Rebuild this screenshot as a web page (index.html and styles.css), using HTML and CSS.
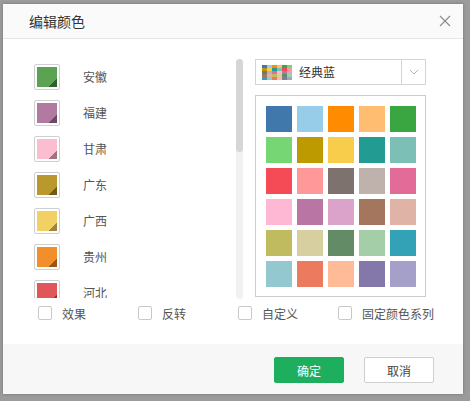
FILE: index.html
```html
<!DOCTYPE html>
<html>
<head>
<meta charset="utf-8">
<link rel="stylesheet" href="styles.css">
</head>
<body>
<div class="dialog">
  <div class="header">
    <span class="title">编辑颜色</span>
    <svg class="close" width="12" height="12" viewBox="0 0 12 12"><path d="M1 1L11 11M11 1L1 11" stroke="#8a8a8a" stroke-width="1.1" fill="none"/></svg>
  </div>
  <div class="content">
    <div class="main">
      <div class="list">
        <div class="item"><span class="sw" style="--c:#5ba353;--d:#335e2e"><i></i></span><span class="lbl">安徽</span></div>
        <div class="item"><span class="sw" style="--c:#b07aa1;--d:#6d4a64"><i></i></span><span class="lbl">福建</span></div>
        <div class="item"><span class="sw" style="--c:#fbbed1;--d:#9c7580"><i></i></span><span class="lbl">甘肃</span></div>
        <div class="item"><span class="sw" style="--c:#b9992e;--d:#6e5a1a"><i></i></span><span class="lbl">广东</span></div>
        <div class="item"><span class="sw" style="--c:#f2d064;--d:#9a843e"><i></i></span><span class="lbl">广西</span></div>
        <div class="item"><span class="sw" style="--c:#f28e2b;--d:#96561a"><i></i></span><span class="lbl">贵州</span></div>
        <div class="item"><span class="sw" style="--c:#e15759;--d:#8b3436"><i></i></span><span class="lbl">河北</span></div>
      </div>
      <div class="track"><div class="thumb"></div></div>
      <div class="right">
        <div class="select">
          <div class="sel-main">
            <span class="mini">
              <i style="background:#4178ab"></i><i style="background:#97cde9"></i><i style="background:#ff8b00"></i><i style="background:#ffbd72"></i><i style="background:#39a641"></i><i style="background:#75d673"></i>
              <i style="background:#bc9a00"></i><i style="background:#f8cd4c"></i><i style="background:#229b93"></i><i style="background:#7bbfb6"></i><i style="background:#f44b57"></i><i style="background:#fe9899"></i>
              <i style="background:#7d726e"></i><i style="background:#bfb1ac"></i><i style="background:#e26b97"></i><i style="background:#feb8d4"></i><i style="background:#b976a5"></i><i style="background:#dba3c9"></i>
              <i style="background:#a4765e"></i><i style="background:#dfb3a6"></i><i style="background:#c1bb60"></i><i style="background:#d7cf9f"></i><i style="background:#638b65"></i><i style="background:#a4cea8"></i>
              <i style="background:#33a2b6"></i><i style="background:#93c8d1"></i><i style="background:#eb7a5e"></i><i style="background:#ffbb97"></i><i style="background:#8477a9"></i><i style="background:#a4a0c9"></i>
            </span>
            <span class="sel-text">经典蓝</span>
          </div>
          <div class="sel-arrow">
            <svg width="10" height="6" viewBox="0 0 10 6"><path d="M1 1L5 5L9 1" stroke="#b5b5b5" stroke-width="1" fill="none"/></svg>
          </div>
        </div>
        <div class="palette">
          <i style="background:#4178ab"></i><i style="background:#97cde9"></i><i style="background:#ff8b00"></i><i style="background:#ffbd72"></i><i style="background:#39a641"></i>
          <i style="background:#75d673"></i><i style="background:#bc9a00"></i><i style="background:#f8cd4c"></i><i style="background:#229b93"></i><i style="background:#7bbfb6"></i>
          <i style="background:#f44b57"></i><i style="background:#fe9899"></i><i style="background:#7d726e"></i><i style="background:#bfb1ac"></i><i style="background:#e26b97"></i>
          <i style="background:#feb8d4"></i><i style="background:#b976a5"></i><i style="background:#dba3c9"></i><i style="background:#a4765e"></i><i style="background:#dfb3a6"></i>
          <i style="background:#c1bb60"></i><i style="background:#d7cf9f"></i><i style="background:#638b65"></i><i style="background:#a4cea8"></i><i style="background:#33a2b6"></i>
          <i style="background:#93c8d1"></i><i style="background:#eb7a5e"></i><i style="background:#ffbb97"></i><i style="background:#8477a9"></i><i style="background:#a4a0c9"></i>
        </div>
      </div>
    </div>
    <div class="checks">
      <label class="chk"><span class="box"></span><span>效果</span></label>
      <label class="chk"><span class="box"></span><span>反转</span></label>
      <label class="chk"><span class="box"></span><span>自定义</span></label>
      <label class="chk"><span class="box"></span><span>固定颜色系列</span></label>
    </div>
  </div>
  <div class="footer">
    <button class="btn ok">确定</button>
    <button class="btn cancel">取消</button>
  </div>
</div>
</body>
</html>
```

FILE: styles.css
```css
html, body {
  margin: 0;
  padding: 0;
}
body {
  background: #9b9b9b;
  width: 470px;
  height: 401px;
  padding: 4px 0 0 3px;
  box-sizing: border-box;
  font-family: "Noto Sans CJK SC", "Noto Sans", sans-serif;
  overflow: hidden;
}
.dialog {
  width: 460px;
  height: 390px;
  background: #fff;
  display: flex;
  flex-direction: column;
  box-shadow: 0 0 3px rgba(0,0,0,0.25);
}
.header {
  height: 35px;
  box-sizing: border-box;
  background: #fafafa;
  border-bottom: 1px solid #e6e6e6;
  display: flex;
  align-items: center;
  justify-content: space-between;
  padding: 0 12px 0 26px;
}
.title {
  font-size: 14px;
  color: #333;
  line-height: 1;
}
.close {
  display: block;
}
.content {
  height: 305px;
  box-sizing: border-box;
  padding: 20px 0 0 31px;
}
.main {
  display: flex;
  align-items: flex-start;
  height: 239px;
}
.list {
  width: 202px;
  height: 239px;
  overflow: hidden;
  padding-top: 5px;
  box-sizing: border-box;
}
.item {
  height: 36px;
  display: flex;
  align-items: flex-start;
}
.sw {
  width: 26px;
  height: 26px;
  box-sizing: border-box;
  border: 1px solid #cfcfcf;
  border-radius: 2px;
  padding: 2px;
  display: block;
}
.sw i {
  display: block;
  width: 20px;
  height: 20px;
  background: linear-gradient(135deg, var(--c) 0 79%, var(--d) 79%);
}
.lbl {
  margin-left: 23px;
  font-size: 12px;
  color: #555;
  line-height: 26px;
}
.track {
  width: 7px;
  height: 240px;
  background: #f1f1f1;
  border-radius: 4px;
  margin-left: 0;
}
.thumb {
  height: 93px;
  background: #d6d6d6;
  border-radius: 4px;
}
.right {
  margin-left: 12px;
  width: 171px;
}
.select {
  height: 26px;
  box-sizing: border-box;
  border: 1px solid #d4d4d4;
  display: flex;
}
.sel-main {
  flex: 1;
  display: flex;
  align-items: center;
  padding-left: 6px;
}
.mini {
  display: grid;
  grid-template-columns: repeat(6, 5px);
  grid-auto-rows: 3px;
  width: 30px;
}
.mini i {
  display: block;
}
.sel-text {
  font-size: 12px;
  color: #333;
  margin-left: 7px;
  line-height: 1;
}
.sel-arrow {
  width: 23px;
  border-left: 1px solid #d4d4d4;
  display: flex;
  align-items: center;
  justify-content: center;
}
.sel-arrow svg {
  display: block;
}
.palette {
  margin-top: 10px;
  height: 202px;
  box-sizing: border-box;
  border: 1px solid #cdcdcd;
  padding: 10px 0 0 10px;
  display: grid;
  grid-template-columns: repeat(5, 26px);
  grid-auto-rows: 26px;
  gap: 5px;
  align-content: start;
}
.palette i {
  display: block;
}
.checks {
  display: flex;
  margin-top: 8px;
  padding-left: 4px;
}
.chk {
  width: 100px;
  display: flex;
  align-items: center;
  font-size: 12px;
  color: #555;
  height: 14px;
}
.box {
  width: 14px;
  height: 14px;
  box-sizing: border-box;
  border: 1px solid #c9c9c9;
  border-radius: 2px;
  background: #fff;
  margin-right: 10px;
}
.footer {
  height: 50px;
  box-sizing: border-box;
  background: #f7f7f7;
  display: flex;
  justify-content: flex-end;
  align-items: flex-start;
  padding: 13px 29px 0 0;
  gap: 20px;
}
.btn {
  width: 70px;
  height: 26px;
  box-sizing: border-box;
  font-family: "Noto Sans CJK SC", "Noto Sans", sans-serif;
  font-size: 12px;
  border-radius: 2px;
  padding: 0;
  cursor: pointer;
}
.ok {
  background: #1dae5e;
  border: 1px solid #1dae5e;
  color: #fff;
}
.cancel {
  background: #fff;
  border: 1px solid #cfcfcf;
  color: #444;
}
```
